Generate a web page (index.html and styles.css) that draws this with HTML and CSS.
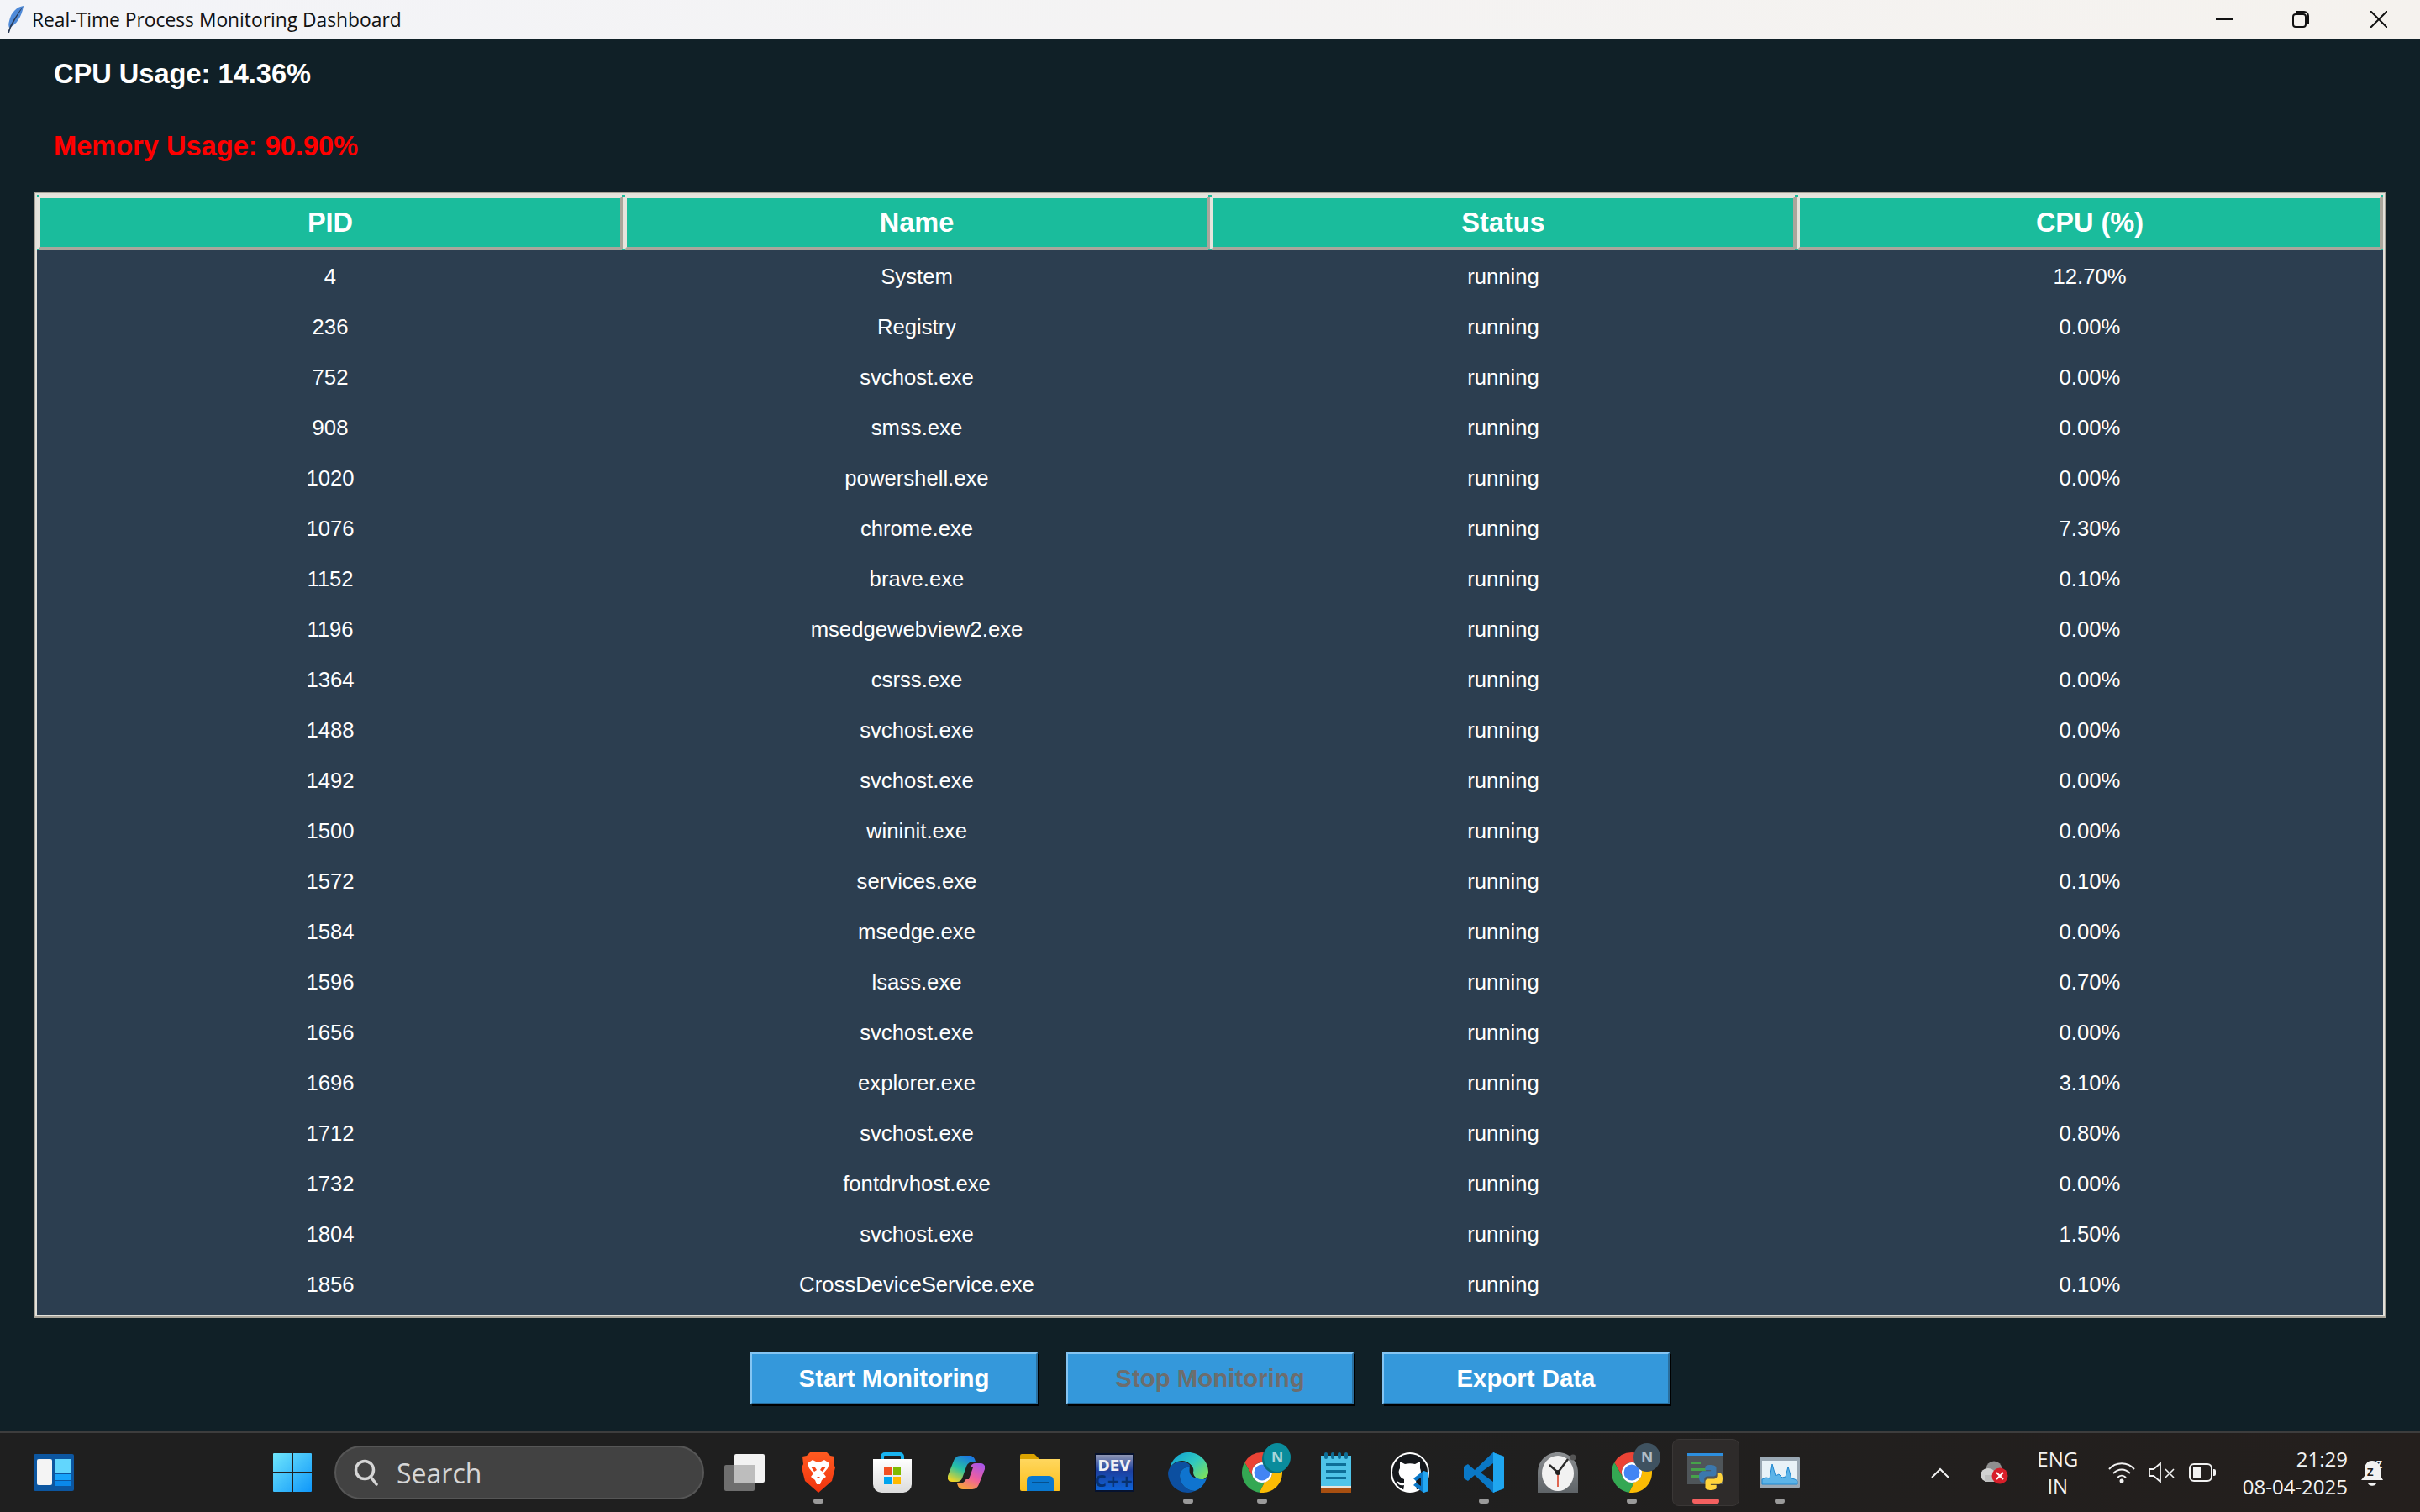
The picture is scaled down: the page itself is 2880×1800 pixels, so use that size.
FILE: index.html
```html
<!DOCTYPE html>
<html lang="en">
<head>
  <meta charset="UTF-8">
  <meta name="viewport" content="width=device-width, initial-scale=1.0">
  <title>Real-Time Process Monitoring Dashboard</title>
  <link rel="stylesheet" href="styles.css">
</head>
<body>
  <svg class="defs" width="0" height="0">
    <defs>
      <linearGradient id="startGrad" x1="0" y1="0" x2="1" y2="1">
        <stop offset="0" stop-color="#6fe6fb"/><stop offset="1" stop-color="#0f97fa"/>
      </linearGradient>
      <linearGradient id="braveGrad" x1="0" y1="0" x2="0" y2="1">
        <stop offset="0" stop-color="#ff5a20"/><stop offset="1" stop-color="#f1330e"/>
      </linearGradient>
      <linearGradient id="bagGrad" x1="0" y1="0" x2="0" y2="1">
        <stop offset="0" stop-color="#ffffff"/><stop offset="1" stop-color="#dcdcdc"/>
      </linearGradient>
      <linearGradient id="copilotA" x1="0.7" y1="0" x2="0.2" y2="1">
        <stop offset="0" stop-color="#1b78e0"/><stop offset="0.5" stop-color="#27c1a4"/><stop offset="1" stop-color="#f4d523"/>
      </linearGradient>
      <linearGradient id="copilotB" x1="0.8" y1="0" x2="0.3" y2="1">
        <stop offset="0" stop-color="#a855e8"/><stop offset="0.55" stop-color="#f0609c"/><stop offset="1" stop-color="#f8a13c"/>
      </linearGradient>
      <linearGradient id="folderGrad" x1="0" y1="0" x2="0" y2="1">
        <stop offset="0" stop-color="#ffd75e"/><stop offset="1" stop-color="#fcbf1c"/>
      </linearGradient>
      <linearGradient id="devGrad" x1="0" y1="0" x2="0" y2="1">
        <stop offset="0" stop-color="#8e96b4"/><stop offset="0.45" stop-color="#1d3f9e"/><stop offset="1" stop-color="#0d63d8"/>
      </linearGradient>
      <linearGradient id="edgeGrad" x1="0" y1="0" x2="1" y2="0.8">
        <stop offset="0" stop-color="#0c9ed8"/><stop offset="0.55" stop-color="#30c8c0"/><stop offset="1" stop-color="#7ce05c"/>
      </linearGradient>
      <linearGradient id="clockGrad" x1="0" y1="0" x2="0" y2="1">
        <stop offset="0" stop-color="#8c8f92"/><stop offset="1" stop-color="#5f6468"/>
      </linearGradient>
      <symbol id="chrome" viewBox="0 0 48 48">
        <path fill="#ea4335" d="M24 0A24 24 0 0 1 44.8 12H24A12 12 0 0 0 13.6 30L3.2 12A24 24 0 0 1 24 0z"/>
        <path fill="#34a853" d="M3.2 12L13.6 30A12 12 0 0 0 27 35.6L20.8 47.8A24 24 0 0 1 3.2 12z"/>
        <path fill="#fbbc04" d="M44.8 12A24 24 0 0 1 20.8 47.8L27 35.6A12 12 0 0 0 34.4 18z"/>
        <circle cx="24" cy="24" r="12" fill="#fff"/>
        <circle cx="24" cy="24" r="9.5" fill="#4285f4"/>
      </symbol>
    </defs>
  </svg>

  <div class="window">
    <header class="titlebar">
      <svg class="feather" width="22" height="34" viewBox="0 0 22 34">
        <path fill="#4f8ad8" d="M20 1C12 2 5 9 3 19c-1 3-1 6 0 8 8-3 15-13 17-26z"/>
        <path fill="#2a3a55" d="M20 1C14 8 8 17 4 25l-3 8 2 0 2-6C10 17 15 9 20 1z"/>
      </svg>
      <span class="title-text">Real-Time Process Monitoring Dashboard</span>
      <div class="win-controls">
        <svg width="20" height="20" viewBox="0 0 20 20"><path d="M0 10h20" stroke="#111" stroke-width="2"/></svg>
        <svg width="20" height="20" viewBox="0 0 20 20" fill="none" stroke="#111" stroke-width="2">
          <rect x="1" y="4" width="15" height="15" rx="3"/>
          <path d="M5 1h9a5 5 0 0 1 5 5v9"/>
        </svg>
        <svg class="win-close" width="20" height="20" viewBox="0 0 20 20"><path d="M0 0l20 20M20 0L0 20" stroke="#111" stroke-width="2"/></svg>
      </div>
    </header>

    <main class="content">
      <div class="stat">CPU Usage: 14.36%</div>
      <div class="stat stat-alert">Memory Usage: 90.90%</div>

      <div class="table-frame">
        <table class="proc-table">
          <thead>
            <tr><th>PID</th><th>Name</th><th>Status</th><th>CPU (%)</th></tr>
          </thead>
          <tbody>
            <tr><td>4</td><td>System</td><td>running</td><td>12.70%</td></tr>
            <tr><td>236</td><td>Registry</td><td>running</td><td>0.00%</td></tr>
            <tr><td>752</td><td>svchost.exe</td><td>running</td><td>0.00%</td></tr>
            <tr><td>908</td><td>smss.exe</td><td>running</td><td>0.00%</td></tr>
            <tr><td>1020</td><td>powershell.exe</td><td>running</td><td>0.00%</td></tr>
            <tr><td>1076</td><td>chrome.exe</td><td>running</td><td>7.30%</td></tr>
            <tr><td>1152</td><td>brave.exe</td><td>running</td><td>0.10%</td></tr>
            <tr><td>1196</td><td>msedgewebview2.exe</td><td>running</td><td>0.00%</td></tr>
            <tr><td>1364</td><td>csrss.exe</td><td>running</td><td>0.00%</td></tr>
            <tr><td>1488</td><td>svchost.exe</td><td>running</td><td>0.00%</td></tr>
            <tr><td>1492</td><td>svchost.exe</td><td>running</td><td>0.00%</td></tr>
            <tr><td>1500</td><td>wininit.exe</td><td>running</td><td>0.00%</td></tr>
            <tr><td>1572</td><td>services.exe</td><td>running</td><td>0.10%</td></tr>
            <tr><td>1584</td><td>msedge.exe</td><td>running</td><td>0.00%</td></tr>
            <tr><td>1596</td><td>lsass.exe</td><td>running</td><td>0.70%</td></tr>
            <tr><td>1656</td><td>svchost.exe</td><td>running</td><td>0.00%</td></tr>
            <tr><td>1696</td><td>explorer.exe</td><td>running</td><td>3.10%</td></tr>
            <tr><td>1712</td><td>svchost.exe</td><td>running</td><td>0.80%</td></tr>
            <tr><td>1732</td><td>fontdrvhost.exe</td><td>running</td><td>0.00%</td></tr>
            <tr><td>1804</td><td>svchost.exe</td><td>running</td><td>1.50%</td></tr>
            <tr><td>1856</td><td>CrossDeviceService.exe</td><td>running</td><td>0.10%</td></tr>
          </tbody>
        </table>
      </div>

      <div class="actions">
        <button class="btn">Start Monitoring</button>
        <button class="btn btn-disabled">Stop Monitoring</button>
        <button class="btn">Export Data</button>
      </div>
    </main>

    <footer class="taskbar">
      <!-- widgets -->
      <div class="task-item widgets-item">
        <svg width="48" height="44" viewBox="0 0 48 44">
          <rect width="48" height="44" rx="2" fill="#0c56a0"/>
          <rect x="4" y="6" width="18" height="31" rx="2" fill="#f4f4f4"/>
          <rect x="26" y="6" width="18" height="17" fill="#62d6fd"/>
          <rect x="26" y="24" width="18" height="7" fill="#17a4fb"/>
          <rect x="26" y="32" width="18" height="6" fill="#0a88ea"/>
        </svg>
      </div>

      <div class="task-item">
        <svg width="46" height="46" viewBox="0 0 46 46" fill="url(#startGrad)">
          <path d="M1 0h21v22H0V1a1 1 0 0 1 1-1zM24 0h21a1 1 0 0 1 1 1v21H24zM0 24h22v22H1a1 1 0 0 1-1-1zM24 24h22v21a1 1 0 0 1-1 1H24z"/>
        </svg>
      </div>

      <div class="search-box">
        <svg width="30" height="32" viewBox="0 0 30 32" fill="none" stroke="#d6d6d6" stroke-width="3.5">
          <circle cx="13" cy="13" r="10.5"/>
          <path d="M20 21l7 9" stroke-linecap="round"/>
        </svg>
        <span>Search</span>
      </div>

      <div class="task-list">
        <!-- task view -->
        <div class="task-item">
          <svg width="48" height="44" viewBox="0 0 48 44">
            <rect y="13" width="36" height="31" rx="2" fill="#6e6e6e"/>
            <rect x="12" width="36" height="34" rx="2" fill="#f2f2f2"/>
            <rect x="12" y="13" width="24" height="21" fill="#bdbdbd"/>
          </svg>
        </div>
        <!-- brave -->
        <div class="task-item running">
          <svg width="40" height="48" viewBox="0 0 40 48">
            <path fill="url(#braveGrad)" d="M10 0h20l4 4 5 1-1 9 2 4-4 16-16 14L4 34 0 18l2-4-1-9 5-1z"/>
            <path fill="#fff" d="M7 13l6-4 4 2h6l4-2 6 4-2 6-5 6 3 4-5 4-2 5h-4l-2-5-5-4 3-4-5-6z"/>
            <path fill="#f4461a" d="M11 17l5 1 2 3-3 2zM29 17l-5 1-2 3 3 2zM18 29h4l-2 2z"/>
          </svg>
        </div>
        <!-- store -->
        <div class="task-item">
          <svg width="46" height="48" viewBox="0 0 46 48">
            <path fill="none" stroke="#18b4f0" stroke-width="4" d="M11 10V5a3 3 0 0 1 3-3h18a3 3 0 0 1 3 3v5"/>
            <path fill="url(#bagGrad)" d="M0 8h46v30a10 10 0 0 1-10 10H10A10 10 0 0 1 0 38z"/>
            <rect x="13" y="18" width="9" height="9" fill="#f25022"/>
            <rect x="24" y="18" width="9" height="9" fill="#7fba00"/>
            <rect x="13" y="29" width="9" height="9" fill="#00a4ef"/>
            <rect x="24" y="29" width="9" height="9" fill="#ffb900"/>
          </svg>
        </div>
        <!-- copilot -->
        <div class="task-item">
          <svg width="44" height="40" viewBox="0 0 44 40">
            <path fill="url(#copilotA)" d="M15 0h11c3 0 5 2 6 4l1 3h-3c-4 0-7 3-8 6l-5 14c-1 2-3 4-6 4H5c-4 0-6-3-5-7L7 6c1-3 4-6 8-6z"/>
            <path fill="url(#copilotB)" d="M29 40H18c-3 0-5-2-6-4l-1-3h3c4 0 7-3 8-6l5-14c1-2 3-4 6-4h6c4 0 6 3 5 7l-7 18c-1 3-4 6-8 6z"/>
            <path fill="#1f1f1f" d="M24 14h6l-5 14h-6z"/>
          </svg>
        </div>
        <!-- explorer -->
        <div class="task-item">
          <svg width="48" height="44" viewBox="0 0 48 44">
            <path fill="#dba300" d="M0 2a2 2 0 0 1 2-2h15l5 5v6H0z"/>
            <path fill="url(#folderGrad)" d="M0 6h48v36a2 2 0 0 1-2 2H2a2 2 0 0 1-2-2z"/>
            <path fill="#0a78cf" d="M8 44V32q0-6 6-6h20q6 0 6 6v12z"/>
            <path stroke="#05518f" stroke-width="2" d="M14 34h20"/>
          </svg>
        </div>
        <!-- dev c++ -->
        <div class="task-item">
          <svg width="46" height="46" viewBox="0 0 46 46">
            <rect width="46" height="46" fill="#06122e"/>
            <rect x="1" y="2" width="44" height="42" fill="url(#devGrad)"/>
            <text class="dev-top" x="23" y="21" text-anchor="middle">DEV</text>
            <text class="dev-bottom" x="23" y="40" text-anchor="middle">C++</text>
          </svg>
        </div>
        <!-- edge -->
        <div class="task-item running">
          <svg width="48" height="48" viewBox="0 0 48 48">
            <path fill="url(#edgeGrad)" d="M2 20C4 8 13 0 24 0c13 0 24 10 24 23 0 6-5 10-11 10-5 0-9-2-9-4 0-1 2-2 2-6 0-8-7-13-13-13C10 10 4 14 2 20z"/>
            <path fill="#0c4fa0" d="M0 24C2 15 9 11 16 11c6 0 10 3 12 7-6-2-14 2-14 10 0 9 8 18 18 18-3 1-5 2-8 2C10 48 0 37 0 24z"/>
            <path fill="#0f74cf" d="M14 28c0-8 8-12 14-10 1 2 1 3 1 5 0 3 4 9 11 9 2 0 4 0 6-1-3 8-8 13-14 15-10 0-18-9-18-18z"/>
            <path fill="#1f1f1f" d="M26 14c4 3 5 6 4 10 0 3 2 5 4 7-4-1-7-3-8-6-1-4 0-8 0-11z"/>
          </svg>
        </div>
        <!-- chrome with profile badge -->
        <div class="task-item running">
          <svg width="48" height="48" viewBox="0 0 48 48"><use href="#chrome"/></svg>
          <span class="badge badge-teal">N</span>
        </div>
        <!-- notepad -->
        <div class="task-item">
          <svg width="36" height="48" viewBox="0 0 36 48">
            <rect y="4" width="36" height="44" fill="#4fc4e8"/>
            <rect y="40" width="36" height="8" fill="#a84f10"/>
            <rect y="40" width="36" height="3" fill="#e8e4da"/>
            <g fill="#0d6f98">
              <rect x="4" width="4" height="8" rx="2"/><rect x="12" width="4" height="8" rx="2"/>
              <rect x="20" width="4" height="8" rx="2"/><rect x="28" width="4" height="8" rx="2"/>
              <rect x="6" y="13" width="24" height="3"/><rect x="6" y="21" width="24" height="3"/><rect x="6" y="29" width="24" height="3"/>
            </g>
          </svg>
        </div>
        <!-- github + vscode -->
        <div class="task-item">
          <svg width="47" height="48" viewBox="0 0 47 48">
            <ellipse cx="23" cy="24" rx="22" ry="23" fill="#15181c" stroke="#fff" stroke-width="2"/>
            <path fill="#fff" d="M11 11l6 3c4-1 8-1 12 0l6-3v8c2 4 1 11-5 13l1 14H15l1-7c-4 1-7 0-9-5 3 1 5 4 9 2v-4c-6-2-8-9-5-13z"/>
            <path fill="#0b78c8" d="M45 24v22l-6 2-12-9 3-3 6 4V30l-6 4-3-3 12-9z"/>
            <path fill="#24a6f0" d="M39 22l6 2v22l-6 2z"/>
          </svg>
        </div>
        <!-- vscode -->
        <div class="task-item running">
          <svg width="48" height="48" viewBox="0 0 48 48">
            <path fill="#0a78c6" d="M35 0L13 21 5 14 0 17v14l5 3 8-7 22 21 13-5V5zM35 13v22L20 24z"/>
            <path fill="#1fa6f0" d="M35 0l13 5v38l-13 5z"/>
          </svg>
        </div>
        <!-- clock -->
        <div class="task-item">
          <svg width="48" height="48" viewBox="0 0 48 48">
            <path fill="url(#clockGrad)" d="M0 48V24C0 10 11 0 24 0s24 10 24 24v24z"/>
            <circle cx="42" cy="6" r="3.5" fill="#555"/>
            <ellipse cx="24" cy="25" rx="19" ry="21" fill="#f2f2f2"/>
            <path d="M24 24l-10-9M24 24l12-16" stroke="#2b2b2b" stroke-width="2.5" fill="none"/>
            <path d="M24 24v17" stroke="#d8391c" stroke-width="1.5"/>
            <circle cx="24" cy="24" r="3" fill="#222"/>
          </svg>
        </div>
        <!-- chrome, second profile -->
        <div class="task-item running">
          <svg width="48" height="48" viewBox="0 0 48 48"><use href="#chrome"/></svg>
          <span class="badge badge-slate">N</span>
        </div>
        <!-- python window, active -->
        <div class="task-item running active">
          <svg width="44" height="46" viewBox="0 0 44 46">
            <rect y="0" width="42" height="37" fill="#4f5559"/>
            <rect y="0" width="42" height="3" fill="#2c8fe0"/>
            <rect x="5" y="10" width="11" height="3" fill="#46a24a"/>
            <rect x="5" y="18" width="17" height="3" fill="#46a24a"/>
            <rect x="5" y="26" width="14" height="3" fill="#46a24a"/>
            <g transform="translate(12 13)">
              <path fill="#3b78ad" d="M15.9 1c-7 0-6.6 3-6.6 3v3.2h6.8v1H6.5S2 7.7 2 14.9s3.9 6.9 3.9 6.9h2.4v-3.3s-.1-3.9 3.9-3.9h6.6s3.7.1 3.7-3.6V5.1S23.2 1 15.9 1z"/>
              <path fill="#ffd43b" d="M16.1 31c7 0 6.6-3 6.6-3v-3.2h-6.8v-1h9.6s4.5.5 4.5-6.7-3.9-6.9-3.9-6.9h-2.4v3.3s.1 3.9-3.9 3.9h-6.6s-3.7-.1-3.7 3.6v6.9S8.8 31 16.1 31z"/>
            </g>
          </svg>
        </div>
        <!-- task manager -->
        <div class="task-item running">
          <svg width="48" height="36" viewBox="0 0 48 36">
            <rect width="48" height="36" rx="1" fill="#9aa8b4"/>
            <rect x="3" y="4" width="42" height="28" fill="#e8f2f8"/>
            <path fill="#5cb4e8" stroke="#1f88d0" stroke-width="1" d="M3 26l5-2 4 1 3-17 4 14 4-2 4 4 4-1 3-12 4 14 4 1 3 2v4H3z"/>
          </svg>
        </div>
      </div>

      <div class="tray">
        <svg class="tray-chevron" width="22" height="13" viewBox="0 0 22 13" fill="none" stroke="#f2f2f2" stroke-width="2">
          <path d="M1 12L11 2l10 10"/>
        </svg>
        <svg class="tray-cloud" width="33" height="28" viewBox="0 0 33 28">
          <circle cx="16" cy="10" r="9.5" fill="#8f8f8f"/>
          <ellipse cx="9" cy="17" rx="9" ry="8" fill="#d2d2d2"/>
          <rect x="5" y="17" width="18" height="8" fill="#bfbfbf"/>
          <circle cx="23" cy="18" r="9.5" fill="#d81f2a"/>
          <path d="M19 14l8 8M27 14l-8 8" stroke="#fff" stroke-width="2"/>
        </svg>
        <div class="tray-lang"><span>ENG</span><span>IN</span></div>
        <svg class="tray-wifi" width="32" height="26" viewBox="0 0 32 26" fill="none" stroke="#f2f2f2" stroke-width="2">
          <path d="M1 9c8-9 22-9 30 0M6 14c6-6 14-6 20 0M11 19c3-3 7-3 10 0"/>
          <circle cx="16" cy="23" r="2.5" fill="#f2f2f2" stroke="none"/>
        </svg>
        <svg class="tray-volume" width="31" height="24" viewBox="0 0 31 24" fill="none" stroke="#f2f2f2" stroke-width="1.8">
          <path d="M1 8v8h5l8 7V1L6 8z"/>
          <path d="M20 8l10 10M30 8L20 18" stroke-width="1.6"/>
        </svg>
        <svg class="tray-battery" width="32" height="22" viewBox="0 0 32 22" fill="none" stroke="#f2f2f2" stroke-width="2">
          <rect x="1" y="1" width="26" height="20" rx="5"/>
          <rect x="5" y="5" width="9" height="12" fill="#f2f2f2" stroke="none"/>
          <path d="M29 8h1a1 1 0 0 1 1 1v4a1 1 0 0 1-1 1h-1" fill="#f2f2f2"/>
        </svg>
        <div class="tray-clock"><span>21:29</span><span>08-04-2025</span></div>
        <svg class="tray-bell" width="28" height="34" viewBox="0 0 28 34">
          <path fill="#f2f2f2" d="M13 3C7 3 4 8 4 13v8l-4 5h26l-3-5v-8c0-5-4-10-10-10z"/>
          <path fill="#f2f2f2" d="M8 29h10c0 5-10 5-10 0z"/>
          <text class="bell-z" x="7" y="21">Z</text>
          <text class="bell-z-top" x="18" y="12">Z</text>
        </svg>
      </div>
    </footer>
  </div>
</body>
</html>
```

FILE: styles.css
```css
* {
  box-sizing: border-box;
}
html,
body {
  margin: 0;
  height: 100%;
}
body {
  font-family: "Liberation Sans", Arial, sans-serif;
  background: #102027;
  overflow: hidden;
}
.defs {
  position: absolute;
}
.window {
  display: flex;
  flex-direction: column;
  height: 1800px;
}

/* title bar */
.titlebar {
  display: flex;
  align-items: center;
  flex: 0 0 46px;
  padding-left: 8px;
  background: linear-gradient(90deg, #f3f4f8, #f5f2ee);
}
.title-text {
  margin-left: 8px;
  font-family: "Open Sans", "Noto Sans", sans-serif;
  font-size: 22.8px;
  color: #111;
  white-space: nowrap;
}
.win-controls {
  display: flex;
  gap: 71px;
  margin-left: auto;
  margin-right: 39px;
}
.win-close {
  margin-left: 2px;
}

/* main area */
.content {
  flex: 1;
  padding: 22px 40px 0;
}
.stat {
  height: 40px;
  margin-bottom: 46px;
  padding-left: 24px;
  font-size: 32.6px;
  line-height: 40px;
  font-weight: bold;
  color: #fff;
}
.stat-alert {
  margin-bottom: 34px;
  color: #f00;
}

.table-frame {
  height: 1341px;
  background: #2c3e50;
  border: 2px solid #a6a298;
  outline: 2px solid #e3e1da;
  outline-offset: -4px;
  padding: 2px;
}
.proc-table {
  width: 100%;
  border-spacing: 0;
  table-layout: fixed;
}
.proc-table th {
  position: relative;
  height: 66px;
  padding: 0;
  background: #1abc9c;
  border-style: solid;
  border-width: 4px;
  border-color: #e6e4dd #aaa69c #aaa69c #e6e4dd;
  font-size: 32.5px;
  font-weight: bold;
  color: #fff;
}
/* little teal nicks on the header corners */
.proc-table th::before {
  content: "";
  position: absolute;
  inset: -4px;
  background:
    linear-gradient(#1abc9c, #1abc9c) 0 0 / 2px 2px no-repeat,
    linear-gradient(#1abc9c, #1abc9c) 100% 0 / 2px 2px no-repeat,
    linear-gradient(#1abc9c, #1abc9c) 0 100% / 2px 2px no-repeat,
    linear-gradient(#1abc9c, #1abc9c) 100% 100% / 2px 2px no-repeat;
}
.proc-table td {
  height: 60px;
  padding: 2px 0 0;
  text-align: center;
  font-size: 25.7px;
  color: #fff;
}

.actions {
  display: flex;
  justify-content: center;
  gap: 34px;
  margin-top: 41px;
}
.btn {
  width: 342px;
  height: 62px;
  padding: 0;
  background: #3498db;
  border-style: solid;
  border-width: 2px;
  border-color: #85c5f2 #2a6f9e #2a6f9e #85c5f2;
  box-shadow: 2px 2px 0 #000;
  font-family: inherit;
  font-size: 29.4px;
  font-weight: bold;
  color: #fff;
}
.btn-disabled {
  color: #6d6d6d;
}

/* taskbar */
.taskbar {
  display: flex;
  align-items: center;
  flex: 0 0 96px;
  padding-left: 20px;
  background: linear-gradient(90deg, #1f1f1f 55%, #241f1d);
  border-top: 2px solid #3d3d3d;
}
.task-item {
  position: relative;
  display: flex;
  align-items: center;
  justify-content: center;
  width: 88px;
  height: 94px;
}
.widgets-item {
  margin-right: 196px;
}
.task-list {
  display: flex;
  margin-left: 4px;
}
.running::after {
  content: "";
  position: absolute;
  left: 38px;
  bottom: 10px;
  width: 12px;
  height: 6px;
  border-radius: 3px;
  background: #9a9a9a;
}
.active::before {
  content: "";
  position: absolute;
  inset: 7px 4px 7px 4px;
  background: #2e2b2a;
  border: 1px solid #3a3736;
  border-radius: 8px;
}
.active svg {
  position: relative;
}
.active::after {
  left: 28px;
  width: 32px;
  background: #f46060;
}
.badge {
  position: absolute;
  left: 46px;
  top: 12px;
  width: 32px;
  height: 34px;
  border-radius: 50%;
  font-size: 19px;
  font-weight: bold;
  line-height: 34px;
  text-align: center;
  color: #a9d6da;
}
.badge-teal {
  background: #0a8c9c;
  box-shadow: -2px 2px 0 #0a6f7c;
}
.badge-slate {
  background: #3f5260;
  color: #b4bec6;
}
.dev-top,
.dev-bottom {
  font-size: 17px;
  font-weight: bold;
  font-family: "DejaVu Sans", sans-serif;
  fill: #f0f0f4;
}
.dev-bottom {
  font-size: 19px;
  fill: #07316f;
}

.search-box {
  display: flex;
  align-items: center;
  width: 440px;
  height: 64px;
  margin-left: 6px;
  padding-left: 21px;
  background: #424242;
  border: 2px solid #565656;
  border-radius: 32px;
  font-family: "Open Sans", "Noto Sans", sans-serif;
  font-size: 32px;
  color: #d6d6d6;
}
.search-box span {
  margin-left: 21px;
}

.tray {
  display: flex;
  align-items: center;
  margin-left: auto;
  margin-right: 42px;
  font-family: "Open Sans", "Noto Sans", sans-serif;
  font-size: 24px;
  color: #f2f2f2;
}
.tray-cloud {
  margin-left: 37px;
}
.tray-lang {
  display: flex;
  flex-direction: column;
  align-items: center;
  width: 60px;
  margin-left: 29px;
  line-height: 32px;
}
.tray-wifi {
  margin-left: 30px;
}
.tray-volume {
  margin-left: 16px;
}
.tray-battery {
  margin-left: 17px;
}
.tray-clock {
  display: flex;
  flex-direction: column;
  align-items: flex-end;
  margin-left: 32px;
  line-height: 33px;
}
.tray-bell {
  margin-left: 16px;
}
.bell-z {
  font-size: 13px;
  font-weight: bold;
  fill: #241f1d;
}
.bell-z-top {
  font-size: 12px;
  font-weight: bold;
  fill: #f2f2f2;
}
```
